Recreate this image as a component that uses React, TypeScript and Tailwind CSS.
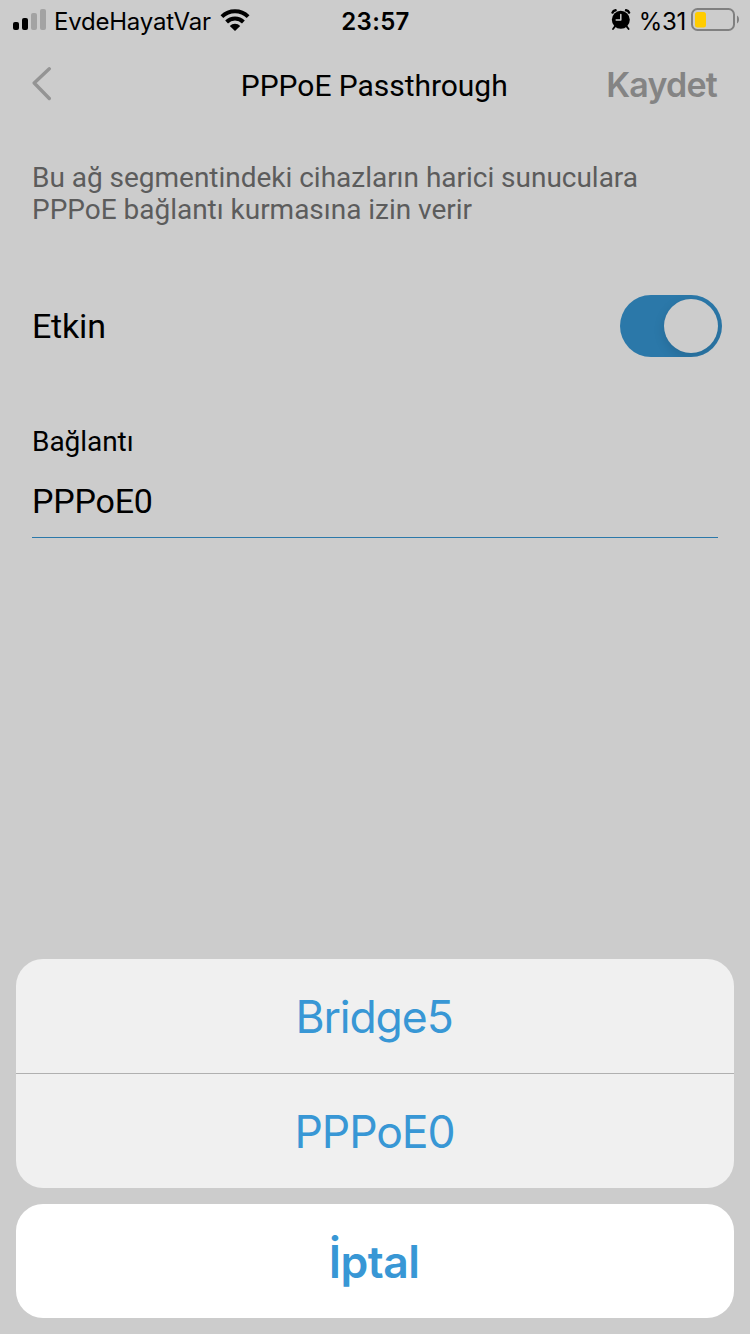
const ui = "font-['Inter',sans-serif]";

function SignalBars() {
  return (
    <svg className="mb-0.5 block" width="33" height="22" viewBox="0 0 33 22">
      <rect x="0" y="13" width="6" height="8" rx="2" fill="#000" />
      <rect x="9" y="9" width="6" height="12" rx="2" fill="#000" />
      <rect x="18" y="4" width="6" height="17" rx="2" fill="#a3a3a3" />
      <rect x="27" y="0" width="6" height="21" rx="2" fill="#a3a3a3" />
    </svg>
  );
}

function Wifi() {
  return (
    <svg className="mb-0.5 block" width="30" height="22" viewBox="0 0 30 22">
      <g fill="none" stroke="#000" strokeWidth="4">
        <path d="M1.9 7.6a18.8 18.8 0 0 1 26.2 0" />
        <path d="M6.6 13a12 12 0 0 1 16.8 0" />
      </g>
      <path d="M15 22 9.8 17a7.2 7.2 0 0 1 10.4 0Z" fill="#000" />
    </svg>
  );
}

function Alarm() {
  return (
    <svg className="mb-0.5 block" width="20" height="22" viewBox="0 0 20 22">
      <circle cx="9.8" cy="10.8" r="9" fill="#000" />
      <path d="M1.5 3.6Q2.2 1.6 4.6 1.3M18.1 3.6Q17.4 1.6 15 1.3" fill="none" stroke="#000" strokeWidth="2.4" strokeLinecap="round" />
      <path d="M3.8 17.6 2 20M15.8 17.6 17.6 20" stroke="#000" strokeWidth="1.8" strokeLinecap="round" />
      <path d="M9.8 5.4V11H5.2" fill="none" stroke="#ccc" strokeWidth="1.5" strokeLinecap="round" strokeLinejoin="round" />
    </svg>
  );
}

function Battery() {
  return (
    <svg className="mb-0.5 block" width="49" height="24" viewBox="0 0 49 24">
      <rect x="1" y="1" width="42" height="21" rx="5.5" fill="none" stroke="#808080" strokeWidth="2" />
      <rect x="4" y="4" width="11" height="15.5" rx="2.5" fill="#ffcc00" />
      <path d="M46 7.6c1.4.8 2 2.2 2 3.9s-.6 3.1-2 3.9Z" fill="#808080" />
    </svg>
  );
}

function StatusBar() {
  return (
    <div className={`grid h-10 grid-cols-[1fr_auto_1fr] items-center pl-[13px] text-2xl/10 text-black ${ui}`}>
      <div className="flex items-center">
        <SignalBars />
        <span className="ml-2 mr-[9px] pt-0.5 tracking-[-0.22px]">EvdeHayatVar</span>
        <Wifi />
      </div>
      <span className="-ml-[12px] pt-0.5 font-semibold tracking-[0.35px]">23:57</span>
      <div className="flex items-center justify-end pr-[10px]">
        <Alarm />
        <span className="ml-2 mr-[5px] pt-0.5 tracking-[-0.3px]">%31</span>
        <Battery />
      </div>
    </div>
  );
}

function Header() {
  return (
    <header className="grid h-[88px] grid-cols-[1fr_auto_1fr] items-center px-8">
      <svg className="block" width="20" height="34" viewBox="0 0 20 34">
        <path d="M17.3 1.8 2.2 16 17.3 31.5" fill="none" stroke="#949494" strokeWidth="3.4" strokeLinecap="round" strokeLinejoin="round" />
      </svg>
      <h1 className="pr-[1.5px] pt-[3px] text-[30px]/10 tracking-[-0.04px]">PPPoE Passthrough</h1>
      <button className={`justify-self-end pr-px pt-0.5 text-[34px]/10 font-semibold tracking-[-0.8px] text-[#848484] ${ui}`}>Kaydet</button>
    </header>
  );
}

function Toggle() {
  return (
    <div className="flex h-[62px] w-[102px] items-center justify-end overflow-hidden rounded-full bg-[#2b78a9] pr-1">
      <div className="size-[54px] rounded-full bg-[#ccc] shadow-[0_4px_12px_rgba(0,0,0,0.12)]" />
    </div>
  );
}

function ActionSheet() {
  return (
    <div className={`flex flex-col gap-4 px-4 pb-4 text-center text-[44.5px] text-[#3897d5] ${ui}`}>
      <div className="flex flex-col overflow-hidden rounded-[27px] bg-[#f0f0f0]">
        <button className="h-[115px] border-b border-[#b0b0b0] pr-0.5 pt-[3px] tracking-[-1.1px]">Bridge5</button>
        <button className="h-[114px] pr-px pt-[3px] tracking-[-1.1px]">PPPoE0</button>
      </div>
      <button className="h-[114px] rounded-[27px] bg-white pr-0.5 pt-[3px] font-semibold tracking-[-0.5px]">İptal</button>
    </div>
  );
}

export default function App() {
  return (
    <div className="flex h-[1334px] w-[750px] flex-col overflow-hidden bg-[#ccc] font-['Roboto',sans-serif] text-black">
      <StatusBar />
      <Header />
      <main className="flex grow flex-col px-8 pt-[34px]">
        <p className="text-[28px]/8 tracking-[-0.02px] text-[#5c5c5c]">
          Bu ağ segmentindeki cihazların harici sunuculara
          <br />
          PPPoE bağlantı kurmasına izin verir
        </p>
        <div className="-mr-1 mt-[69px] flex items-center justify-between">
          <span className="text-[34px]/10 tracking-[-0.2px]">Etkin</span>
          <Toggle />
        </div>
        <label className="mt-[69px] text-[28px]/8 tracking-[-0.05px]">Bağlantı</label>
        <div className="mt-[23px] h-[57px] border-b border-[#2b78a9] text-[34px]/10 tracking-[-0.2px]">PPPoE0</div>
      </main>
      <ActionSheet />
    </div>
  );
}
